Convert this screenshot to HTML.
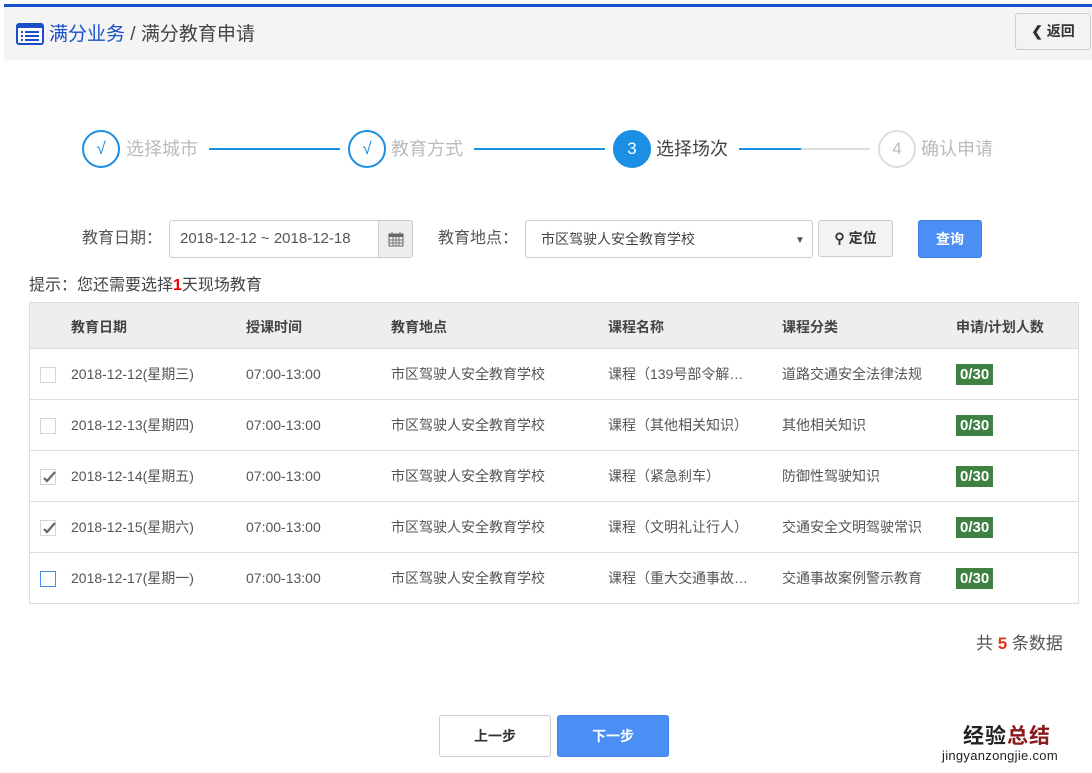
<!DOCTYPE html>
<html><head><meta charset="utf-8"><style>
*{margin:0;padding:0;box-sizing:border-box}
body{width:1092px;height:773px;background:#fff;position:relative;overflow:hidden;font-family:"Liberation Sans","Microsoft YaHei","Noto Sans CJK SC",sans-serif;color:#555;font-size:15px}
.a{position:absolute;line-height:20px}
.bar{left:4px;top:4px;width:1088px;height:3px;background:#1753cc}
.hdr{left:4px;top:7px;width:1088px;height:53px;background:#f4f4f4}
.circ{width:38px;height:38px;border-radius:50%;border:2px solid #1a8fe3;color:#1a8fe3;text-align:center;line-height:34px;font-size:17px;top:130px}
.st{top:138px;font-size:18px;color:#bbb;line-height:22px}
.ln{height:2px;top:148px;background:#1a8fe3}
.btn{border:1px solid #ccc;border-radius:3px;background:#f3f3f3;text-align:center;font-weight:bold;font-size:14px;color:#333}
.row{left:29px;width:1050px;height:51px;border-bottom:1px solid #ddd;border-left:1px solid #ddd;border-right:1px solid #ddd}
.row span{position:absolute;top:15px;font-size:14px;line-height:20px;white-space:nowrap}
.cb{position:absolute;left:10px;top:18px;width:16px;height:16px;border:1px solid #d5d5d5;background:#fff}
.cb svg{position:absolute;left:1px;top:0}
.row span.badge{background:#3f8143;color:#fff;font-weight:bold;padding:0 4px;font-size:15px;top:15px;line-height:21px}
</style></head><body>
<div class="a bar"></div>
<div class="a hdr"></div>
<svg class="a" style="left:16px;top:23px" width="28" height="22" viewBox="0 0 28 22"><rect x="1" y="1" width="26" height="20" rx="2" fill="#fff" stroke="#1a4fc9" stroke-width="2"/><rect x="1" y="1" width="26" height="4" fill="#1a4fc9"/><g fill="#1a4fc9"><rect x="5" y="8" width="2" height="2"/><rect x="9" y="8" width="14" height="2"/><rect x="5" y="12" width="2" height="2"/><rect x="9" y="12" width="14" height="2"/><rect x="5" y="16" width="2" height="2"/><rect x="9" y="16" width="14" height="2"/></g></svg>
<div class="a" style="left:49px;top:23px;font-size:19px;line-height:24px;color:#444"><span style="color:#1a4fc9">满分业务</span> / 满分教育申请</div>
<div class="a btn" style="left:1015px;top:13px;width:76px;height:37px;line-height:35px;font-size:14px">❮ 返回</div>

<div class="a circ" style="left:82px">√</div><div class="a st" style="left:126px">选择城市</div>
<div class="a ln" style="left:209px;width:131px"></div>
<div class="a circ" style="left:348px">√</div><div class="a st" style="left:391px">教育方式</div>
<div class="a ln" style="left:474px;width:131px"></div>
<div class="a circ" style="left:613px;background:#1a8fe3;color:#fff">3</div><div class="a st" style="left:656px;color:#444">选择场次</div>
<div class="a ln" style="left:739px;width:62px"></div><div class="a ln" style="left:801px;width:69px;background:#ddd"></div>
<div class="a circ" style="left:878px;border-color:#ddd;color:#bbb">4</div><div class="a st" style="left:921px">确认申请</div>

<div class="a" style="left:82px;top:229px;font-size:16px">教育日期：</div>
<div class="a" style="left:169px;top:220px;width:244px;height:38px;border:1px solid #ccc;border-radius:3px;background:#fff"></div>
<div class="a" style="left:180px;top:229px;font-size:15px">2018-12-12 ~ 2018-12-18</div>
<div class="a" style="left:378px;top:220px;width:35px;height:38px;border:1px solid #ccc;border-radius:0 3px 3px 0;background:#eee;text-align:center;padding-top:10px"><svg width="16" height="16" viewBox="0 0 16 16"><rect x="1" y="3" width="14" height="12" fill="none" stroke="#666"/><rect x="1" y="3" width="14" height="3" fill="#666"/><path d="M4 1v4M12 1v4M1 9h14M1 12h14M5 6v9M8 6v9M11 6v9" stroke="#777" stroke-width="1"/></svg></div>
<div class="a" style="left:438px;top:229px;font-size:16px">教育地点：</div>
<div class="a" style="left:525px;top:220px;width:288px;height:38px;border:1px solid #ccc;border-radius:3px"></div>
<div class="a" style="left:541px;top:229px;font-size:14px;color:#444">市区驾驶人安全教育学校</div>
<div class="a" style="left:795px;top:231px;font-size:10px;color:#555">▼</div>
<div class="a btn" style="left:818px;top:220px;width:75px;height:37px;line-height:35px">⚲ 定位</div>
<div class="a btn" style="left:918px;top:220px;width:64px;height:38px;line-height:36px;background:#4b8ff5;border-color:#3d7fe6;color:#fff">查询</div>

<div class="a" style="left:29px;top:275px;font-size:16px;line-height:22px;color:#444">提示：您还需要选择<b style="color:#e00">1</b>天现场教育</div>

<div class="a" style="left:29px;top:302px;width:1050px;height:47px;background:#efeded;border:1px solid #ddd;font-weight:bold;font-size:14px;color:#444">
<span class="a" style="left:41px;top:14px">教育日期</span><span class="a" style="left:216px;top:14px">授课时间</span><span class="a" style="left:361px;top:14px">教育地点</span><span class="a" style="left:578px;top:14px">课程名称</span><span class="a" style="left:752px;top:14px">课程分类</span><span class="a" style="left:926px;top:14px">申请/计划人数</span></div>

<div class="a row" style="top:349px"><div class="cb"></div><span style="left:41px">2018-12-12(星期三)</span><span style="left:216px">07:00-13:00</span><span style="left:361px">市区驾驶人安全教育学校</span><span style="left:578px">课程（139号部令解…</span><span style="left:752px">道路交通安全法律法规</span><span class="badge" style="left:926px">0/30</span></div>
<div class="a row" style="top:400px"><div class="cb"></div><span style="left:41px">2018-12-13(星期四)</span><span style="left:216px">07:00-13:00</span><span style="left:361px">市区驾驶人安全教育学校</span><span style="left:578px">课程（其他相关知识）</span><span style="left:752px">其他相关知识</span><span class="badge" style="left:926px">0/30</span></div>
<div class="a row" style="top:451px"><div class="cb"><svg width="14" height="14" viewBox="0 0 14 14"><path d="M2 8l3 3L13 2" fill="none" stroke="#666" stroke-width="2.2"/></svg></div><span style="left:41px">2018-12-14(星期五)</span><span style="left:216px">07:00-13:00</span><span style="left:361px">市区驾驶人安全教育学校</span><span style="left:578px">课程（紧急刹车）</span><span style="left:752px">防御性驾驶知识</span><span class="badge" style="left:926px">0/30</span></div>
<div class="a row" style="top:502px"><div class="cb"><svg width="14" height="14" viewBox="0 0 14 14"><path d="M2 8l3 3L13 2" fill="none" stroke="#666" stroke-width="2.2"/></svg></div><span style="left:41px">2018-12-15(星期六)</span><span style="left:216px">07:00-13:00</span><span style="left:361px">市区驾驶人安全教育学校</span><span style="left:578px">课程（文明礼让行人）</span><span style="left:752px">交通安全文明驾驶常识</span><span class="badge" style="left:926px">0/30</span></div>
<div class="a row" style="top:553px"><div class="cb" style="border-color:#4a8af4"></div><span style="left:41px">2018-12-17(星期一)</span><span style="left:216px">07:00-13:00</span><span style="left:361px">市区驾驶人安全教育学校</span><span style="left:578px">课程（重大交通事故…</span><span style="left:752px">交通事故案例警示教育</span><span class="badge" style="left:926px">0/30</span></div>

<div class="a" style="left:976px;top:633px;font-size:17px;line-height:22px">共 <b style="color:#d9381e">5</b> 条数据</div>

<div class="a btn" style="left:439px;top:715px;width:112px;height:42px;line-height:40px;background:#fff">上一步</div>
<div class="a btn" style="left:557px;top:715px;width:112px;height:42px;line-height:40px;background:#4b8ff5;border-color:#3d7fe6;color:#fff">下一步</div>

<div class="a" style="left:963px;top:725px;font-size:21px;line-height:24px;font-weight:bold;color:#222;letter-spacing:1px">经验<span style="color:#8b1a1a">总结</span></div>
<div class="a" style="left:942px;top:748px;font-size:13px;line-height:16px;color:#222;letter-spacing:0.3px">jingyanzongjie.com</div>
</body></html>
